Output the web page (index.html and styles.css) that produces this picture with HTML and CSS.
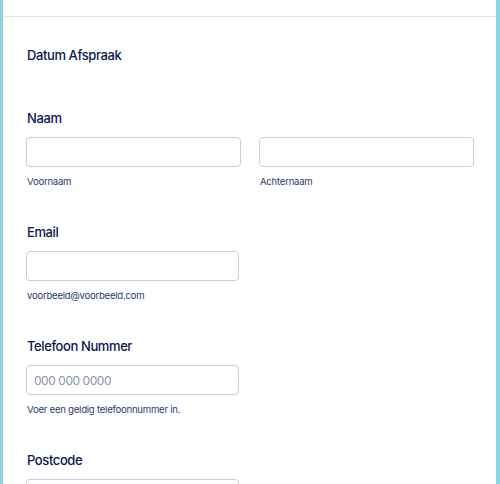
FILE: index.html
```html
<!DOCTYPE html>
<html lang="nl">
<head>
<meta charset="utf-8">
<title>Afspraak</title>
<link rel="stylesheet" href="styles.css">
</head>
<body>
<div class="frame">
  <div class="card">
    <div class="header"></div>
    <div class="content">
      <div class="field first">
        <div class="label">Datum Afspraak</div>
      </div>
      <div class="field">
        <div class="label">Naam</div>
        <div class="row">
          <div class="col">
            <div class="input wide"></div>
            <div class="sub">Voornaam</div>
          </div>
          <div class="col">
            <div class="input wide"></div>
            <div class="sub">Achternaam</div>
          </div>
        </div>
      </div>
      <div class="field">
        <div class="label">Email</div>
        <div class="input"></div>
        <div class="sub">voorbeeld@voorbeeld.com</div>
      </div>
      <div class="field">
        <div class="label">Telefoon Nummer</div>
        <div class="input"><span class="placeholder">000 000 0000</span></div>
        <div class="sub">Voer een geldig telefoonnummer in.</div>
      </div>
      <div class="field">
        <div class="label">Postcode</div>
        <div class="input"></div>
      </div>
    </div>
  </div>
</div>
</body>
</html>
```
FILE: styles.css
```css
html, body {
  margin: 0;
  padding: 0;
  height: 100%;
  overflow: hidden;
}
body {
  font-family: Inter, "Noto Sans", sans-serif;
  background: #8bd3de;
}
.frame {
  height: 484px;
  padding: 0 4px 0 3px;
  box-sizing: border-box;
  overflow: hidden;
}
.card {
  background: #ffffff;
  height: 100%;
  overflow: hidden;
}
.header {
  height: 16px;
  border-bottom: 1px solid #e2e3ef;
}
.content {
  padding: 0 22px 0 23px;
}
.field {
  padding-top: 33px;
}
.field.first {
  padding-top: 28px;
}
.label {
  font-size: 13px;
  line-height: 20px;
  font-weight: 500;
  letter-spacing: -0.4px;
  color: #0a1551;
  padding-left: 1px;
}
.field.first + .field {
  padding-top: 43px;
}
.row {
  display: flex;
  gap: 18px;
}
.col {
  flex: 1;
}
.input {
  margin-top: 9px;
  width: 213px;
  height: 30px;
  box-sizing: border-box;
  border: 1px solid #c8ccdb;
  border-radius: 4px;
  background: #fff;
  display: flex;
  align-items: center;
  padding: 0 7px;
}
.input.wide {
  width: 215px;
}
.placeholder {
  font-size: 12px;
  letter-spacing: -0.45px;
  color: #8c93ad;
}
.sub {
  margin-top: 8px;
  font-size: 9.6px;
  line-height: 14px;
  letter-spacing: -0.25px;
  color: #2b3a72;
  padding-left: 1px;
}
```
